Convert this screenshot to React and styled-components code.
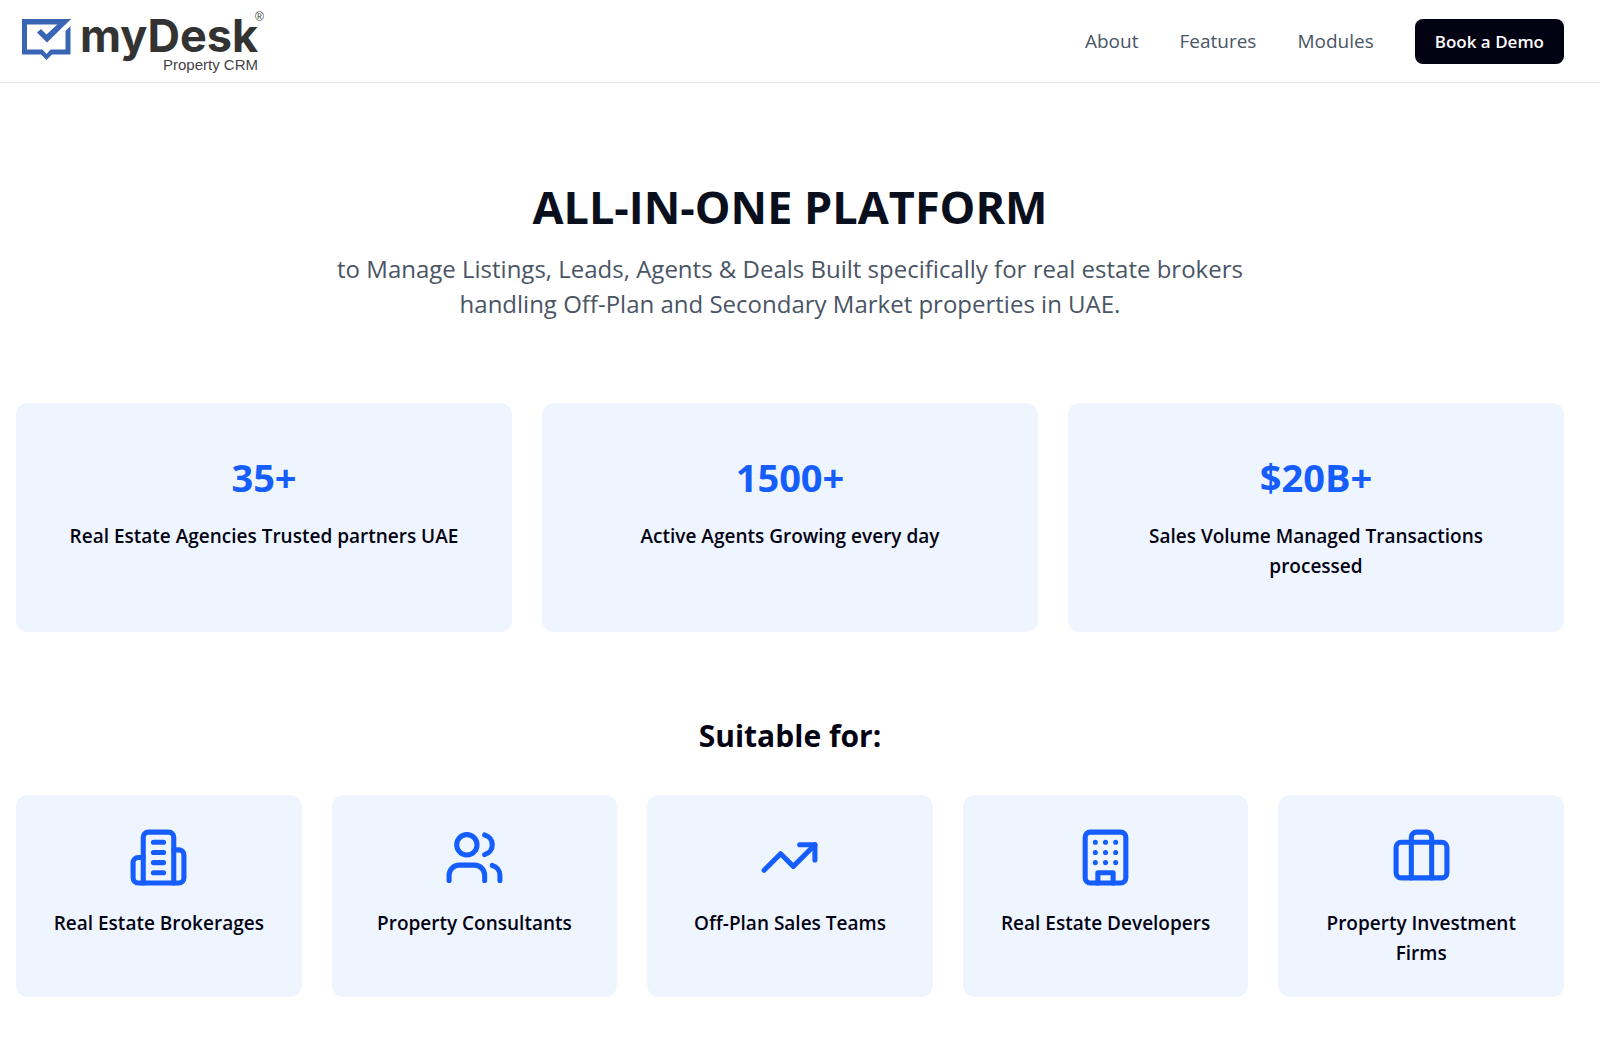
import styled, { createGlobalStyle } from "styled-components"
import { Users, TrendingUp, Briefcase } from "lucide-react"

const GlobalStyle = createGlobalStyle`
  * {
    box-sizing: border-box;
  }
  body {
    margin: 0;
    background-color: #fff;
    color: #030213;
    font-family: "Open Sans", "Noto Sans", sans-serif;
  }
  h1, h2, p, ul {
    margin: 0;
    padding: 0;
  }
`

const Header = styled.header`
    display: flex;
    align-items: center;
    justify-content: space-between;
    height: 83px;
    padding: 0 36px 0 16px;
    border-bottom: 1px solid #e5e7eb;
`
const LogoLink = styled.a`
    display: flex;
`
const Nav = styled.nav`
    display: flex;
    align-items: center;
    gap: 41px;
`
const NavLink = styled.a`
    color: #4a5565;
    font-size: 19px;
    text-decoration: none;
`
const DemoButton = styled.button`
    height: 45px;
    padding: 0 20px;
    border: none;
    border-radius: 8px;
    background-color: #030213;
    color: white;
    font-family: inherit;
    font-size: 17px;
    font-weight: 600;
    cursor: pointer;
`

const Main = styled.main`
    padding: 96px 36px 40px 16px;
`
const Hero = styled.section`
    max-width: 1000px;
    margin: 0 auto 82px;
    text-align: center;
`
const Title = styled.h1`
    margin-bottom: 16px;
    font-size: 45px;
    font-weight: 700;
    line-height: 56px;
    color: #0a0f1e;
`
const Subtitle = styled.p`
    font-size: 24px;
    line-height: 35px;
    color: #4a5565;
`

const Stats = styled.ul`
    display: grid;
    grid-template-columns: repeat(3, 1fr);
    gap: 30px;
    list-style: none;
`
const Card = styled.li`
    display: flex;
    flex-direction: column;
    align-items: center;
    padding: ${props => props.$size === 'large' ? '48px 50px 51px' : '32px 30px 29px'};
    border-radius: 12px;
    background-color: #eef5ff;
    text-align: center;
`
const StatValue = styled.strong`
    margin-bottom: 18px;
    font-size: 38px;
    font-weight: 700;
    line-height: 52px;
    color: #155dfc;
`
const CardText = styled.span`
    font-size: 19px;
    font-weight: 600;
    line-height: 30px;
`

const SectionTitle = styled.h2`
    margin: 80px 0 35px;
    font-size: 30px;
    font-weight: 700;
    line-height: 48px;
    text-align: center;
`
const Audience = styled.ul`
    display: grid;
    grid-template-columns: repeat(5, 1fr);
    gap: 30px;
    list-style: none;
`
const IconBox = styled.div`
    display: flex;
    margin-bottom: 20px;
    color: #155dfc;
`

const Logo = () => (
    <svg width="254" height="72" viewBox="16 4 254 72" role="img" aria-label="myDesk Property CRM">
        <path d="M22 18H71L65 23.5H27V48.5H42.5L46.5 53L50.5 48.5H65.5V30L70.5 25V53.5H52L46.5 59L41 53.5H22Z" fill="#3a64b4" />
        <path d="M37 31.5L41 28L46.5 33.5L61 20L71 18L47 41.5Z" fill="#3a64b4" />
        <text x="80" y="51" fontFamily="Inter" fontSize="45" fontWeight="700" fill="#333">myDesk</text>
        <text x="163" y="69" fontFamily="Liberation Sans" fontSize="15" fill="#444">Property CRM</text>
        <text x="255" y="20" fontFamily="Liberation Sans" fontSize="12" fill="#444">®</text>
    </svg>
)

const LineIcon = ({ children }) => (
    <svg width="61" height="61" viewBox="0 0 24 24" fill="none" stroke="currentColor"
        strokeWidth="2" strokeLinecap="round" strokeLinejoin="round">
        {children}
    </svg>
)

const Brokerage = () => (
    <LineIcon>
        <path d="M6 22V4a2 2 0 0 1 2-2h8a2 2 0 0 1 2 2v18Z" />
        <path d="M6 12H4a2 2 0 0 0-2 2v6a2 2 0 0 0 2 2h2" />
        <path d="M18 9h2a2 2 0 0 1 2 2v9a2 2 0 0 1-2 2h-2" />
        <path d="M10 6h4M10 10h4M10 14h4M10 18h4" />
    </LineIcon>
)

const Tower = () => (
    <LineIcon>
        <rect width="16" height="20" x="4" y="2" rx="2" />
        <path d="M9 22v-4h6v4" />
        <path d="M8 6h.01M16 6h.01M12 6h.01M12 10h.01M12 14h.01M16 10h.01M16 14h.01M8 10h.01M8 14h.01" />
    </LineIcon>
)

const stats = [
    { value: "35+", label: "Real Estate Agencies Trusted partners UAE" },
    { value: "1500+", label: "Active Agents Growing every day" },
    { value: "$20B+", label: "Sales Volume Managed Transactions processed" },
]

const audience = [
    { icon: <Brokerage />, label: "Real Estate Brokerages" },
    { icon: <Users size={61} />, label: "Property Consultants" },
    { icon: <TrendingUp size={61} />, label: "Off-Plan Sales Teams" },
    { icon: <Tower />, label: "Real Estate Developers" },
    { icon: <Briefcase size={61} />, label: "Property Investment Firms" },
]

const App = () => {
    return (
        <>
            <GlobalStyle />
            <Header>
                <LogoLink href="#"><Logo /></LogoLink>
                <Nav>
                    <NavLink href="#about">About</NavLink>
                    <NavLink href="#features">Features</NavLink>
                    <NavLink href="#modules">Modules</NavLink>
                    <DemoButton>Book a Demo</DemoButton>
                </Nav>
            </Header>
            <Main>
                <Hero>
                    <Title>ALL-IN-ONE PLATFORM</Title>
                    <Subtitle>
                        to Manage Listings, Leads, Agents &amp; Deals Built specifically for real estate brokers
                        handling Off-Plan and Secondary Market properties in UAE.
                    </Subtitle>
                </Hero>
                <Stats>
                    {stats.map(item => (
                        <Card key={item.label} $size="large">
                            <StatValue>{item.value}</StatValue>
                            <CardText>{item.label}</CardText>
                        </Card>
                    ))}
                </Stats>
                <SectionTitle>Suitable for:</SectionTitle>
                <Audience>
                    {audience.map(item => (
                        <Card key={item.label}>
                            <IconBox>{item.icon}</IconBox>
                            <CardText>{item.label}</CardText>
                        </Card>
                    ))}
                </Audience>
            </Main>
        </>
    )
}

export default App
